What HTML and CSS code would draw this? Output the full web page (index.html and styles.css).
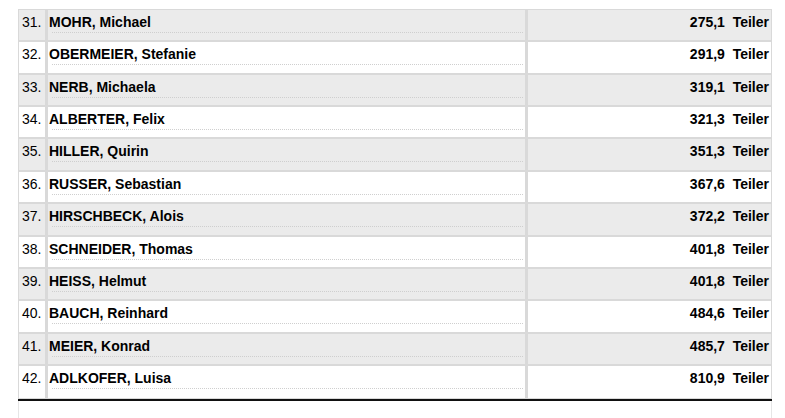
FILE: index.html
```html
<!DOCTYPE html>
<html lang="de">
<head>
<meta charset="utf-8">
<link rel="stylesheet" href="styles.css">
</head>
<body>
<div class="panel">
<table class="ranking">
<tbody>
<tr class="odd"><td class="pos">31.</td><td class="name"><div class="n">MOHR, Michael</div><div class="dots"></div></td><td class="val">275,1&nbsp; Teiler</td></tr>
<tr><td class="pos">32.</td><td class="name"><div class="n">OBERMEIER, Stefanie</div><div class="dots"></div></td><td class="val">291,9&nbsp; Teiler</td></tr>
<tr class="odd"><td class="pos">33.</td><td class="name"><div class="n">NERB, Michaela</div><div class="dots"></div></td><td class="val">319,1&nbsp; Teiler</td></tr>
<tr><td class="pos">34.</td><td class="name"><div class="n">ALBERTER, Felix</div><div class="dots"></div></td><td class="val">321,3&nbsp; Teiler</td></tr>
<tr class="odd"><td class="pos">35.</td><td class="name"><div class="n">HILLER, Quirin</div><div class="dots"></div></td><td class="val">351,3&nbsp; Teiler</td></tr>
<tr><td class="pos">36.</td><td class="name"><div class="n">RUSSER, Sebastian</div><div class="dots"></div></td><td class="val">367,6&nbsp; Teiler</td></tr>
<tr class="odd"><td class="pos">37.</td><td class="name"><div class="n">HIRSCHBECK, Alois</div><div class="dots"></div></td><td class="val">372,2&nbsp; Teiler</td></tr>
<tr><td class="pos">38.</td><td class="name"><div class="n">SCHNEIDER, Thomas</div><div class="dots"></div></td><td class="val">401,8&nbsp; Teiler</td></tr>
<tr class="odd"><td class="pos">39.</td><td class="name"><div class="n">HEISS, Helmut</div><div class="dots"></div></td><td class="val">401,8&nbsp; Teiler</td></tr>
<tr><td class="pos">40.</td><td class="name"><div class="n">BAUCH, Reinhard</div><div class="dots"></div></td><td class="val">484,6&nbsp; Teiler</td></tr>
<tr class="odd"><td class="pos">41.</td><td class="name"><div class="n">MEIER, Konrad</div><div class="dots"></div></td><td class="val">485,7&nbsp; Teiler</td></tr>
<tr><td class="pos">42.</td><td class="name"><div class="n">ADLKOFER, Luisa</div><div class="dots"></div></td><td class="val">810,9&nbsp; Teiler</td></tr>
</tbody>
</table>
<div class="foot"></div>
</div>
</body>
</html>
```

FILE: styles.css
```css
html, body {
  margin: 0;
  padding: 0;
  background: #ffffff;
}
body {
  font-family: "Liberation Sans", Arial, sans-serif;
  font-size: 14px;
  color: #000;
}
.panel {
  margin: 9px 13px 0 18px;
  border-left: 1px solid #e6e6e6;
  border-right: 1px solid #e6e6e6;
}
.ranking {
  border-collapse: separate;
  border-spacing: 0;
  margin-left: -1px;
  width: calc(100% + 2px);
  border-bottom: 2px solid #111;
}
.ranking td {
  border: 1px solid #d9d9d9;
  vertical-align: top;
  height: 27.36px;
  padding: 3px 2px 0 3px;
  line-height: 19px;
}
.ranking tr.odd td {
  background: #ebebeb;
}
.ranking tr:last-child td {
  height: 29.36px;
}
.pos {
  width: 21px;
  font-weight: normal;
}
.ranking td.name {
  width: 474px;
  font-weight: bold;
  border-left-width: 2px;
  padding-left: 1px;
}
.n {
  height: 19px;
}
.dots {
  margin-top: 0;
  margin-left: 3px;
  border-top: 1px dotted #cfcfcf;
}
.ranking td.val {
  text-align: right;
  font-weight: bold;
  white-space: nowrap;
  border-left-width: 2px;
}
.foot {
  height: 20px;
}
```
